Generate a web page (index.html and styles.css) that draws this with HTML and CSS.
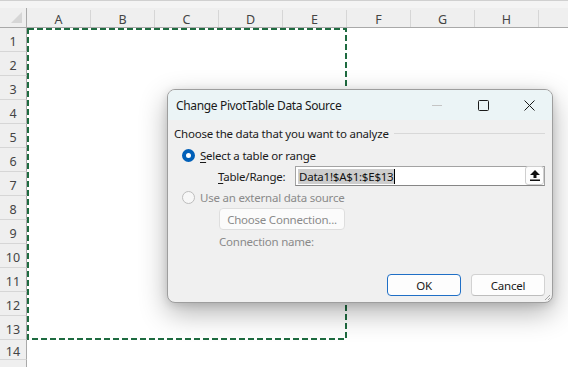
FILE: index.html
```html
<!DOCTYPE html>
<html>
<head>
<meta charset="utf-8">
<link rel="stylesheet" href="styles.css">
</head>
<body>
<div class="topbar"></div>
<div class="sheet">
  <div class="corner"><svg class="tri" width="12" height="12" viewBox="0 0 12 12"><polygon points="11,0 11,11 0,11" fill="#d6d6d6"/></svg></div>
  <div class="colheads">
    <div class="col">A</div><div class="col">B</div><div class="col">C</div><div class="col">D</div><div class="col">E</div><div class="col">F</div><div class="col">G</div><div class="col">H</div><div class="col"></div>
  </div>
  <div class="rh">1</div><div class="rh">2</div><div class="rh">3</div><div class="rh">4</div><div class="rh">5</div><div class="rh">6</div><div class="rh">7</div><div class="rh">8</div><div class="rh">9</div><div class="rh">10</div><div class="rh">11</div><div class="rh">12</div><div class="rh">13</div><div class="rh">14</div><div class="rh">15</div>
  <div class="cells"></div>
</div>

<svg class="marquee" width="320" height="312" viewBox="0 0 320 312">
  <rect x="1" y="1" width="318" height="310" fill="none" stroke="#1e6b40" stroke-width="2" stroke-dasharray="6 3"/>
</svg>

<div class="dialog">
  <div class="titlebar">
    <span class="title">Change PivotTable Data Source</span>
    <div class="controls">
      <span class="ctl"><svg width="10" height="10" viewBox="0 0 10 10"><line x1="0" y1="5.5" x2="10" y2="5.5" stroke="#c4c4c4" stroke-width="1"/></svg></span>
      <span class="ctl"><svg width="11" height="11" viewBox="0 0 11 11"><rect x="0.5" y="0.5" width="10" height="10" rx="1" fill="none" stroke="#1a1a1a" stroke-width="1"/></svg></span>
      <span class="ctl"><svg width="11" height="11" viewBox="0 0 11 11"><path d="M0.5 0.5 L10.5 10.5 M10.5 0.5 L0.5 10.5" stroke="#1a1a1a" stroke-width="1"/></svg></span>
    </div>
  </div>
  <div class="body">
    <div class="group-head"><span>Choose the data that you want to analyze</span><span class="rule"></span></div>
    <div class="opt"><span class="radio on"></span><span><u>S</u>elect a table or range</span></div>
    <div class="field">
      <span class="flabel"><u>T</u>able/Range:</span>
      <div class="input">
        <span class="sel">Data1!$A$1:$E$13</span><span class="caret"></span>
        <span class="pick"><svg width="10" height="11" viewBox="0 0 10 11"><polygon points="5,0 10,5 6.5,5 6.5,8 3.5,8 3.5,5 0,5" fill="#111"/><rect x="0" y="9.5" width="10" height="1.5" fill="#111"/></svg></span>
      </div>
    </div>
    <div class="opt off"><span class="radio"></span><span>Use an external data source</span></div>
    <div class="indent"><button class="btn dis">Choose Connection...</button></div>
    <div class="indent muted conn">Connection name:</div>
    <div class="actions">
      <button class="btn primary">OK</button>
      <button class="btn">Cancel</button>
    </div>
  </div>
  <svg class="grip" width="8" height="8" viewBox="0 0 8 8"><path d="M7 2 L2 7 M7 5 L5 7" stroke="#a8a8a8" stroke-width="1"/></svg>
</div>
</body>
</html>
```

FILE: styles.css
```css
html, body {
  margin: 0;
  padding: 0;
}
body {
  width: 568px;
  height: 367px;
  overflow: hidden;
  position: relative;
  background: #fff;
  font-family: "Noto Sans", "Segoe UI", sans-serif;
}

.topbar {
  height: 8px;
  box-sizing: border-box;
  background: #f4f4f4;
  border-top: 1px solid #d0d0d0;
}

.sheet {
  display: grid;
  grid-template-columns: 27px 1fr;
  grid-template-rows: 20px repeat(13, 24px) 20px 24px;
  color: #444;
  font-size: 12.5px;
}

.corner {
  background: #efefef;
  border-right: 1px solid #a9a9a9;
  border-bottom: 1px solid #a9a9a9;
  box-sizing: border-box;
  display: flex;
  align-items: flex-end;
  justify-content: flex-end;
  padding: 0 3px 3px 0;
}

.colheads {
  display: flex;
  overflow: hidden;
  background: #efefef;
  border-bottom: 1px solid #a9a9a9;
  box-sizing: border-box;
}
.col {
  flex: 0 0 64px;
  box-sizing: border-box;
  border-right: 1px solid #d6d6d6;
  margin-top: 2px;
  display: flex;
  align-items: center;
  justify-content: center;
  padding-top: 1px;
}

.rh {
  grid-column: 1;
  background: #efefef;
  border-right: 1px solid #a9a9a9;
  border-bottom: 1px solid #d6d6d6;
  box-sizing: border-box;
  display: flex;
  align-items: center;
  justify-content: center;
  padding-top: 3px;
}

.cells {
  grid-column: 2;
  grid-row: 2 / -1;
  background: #fff;
}

.marquee {
  position: absolute;
  left: 27px;
  top: 28px;
}

/* dialog */
.dialog {
  position: absolute;
  left: 167px;
  top: 89px;
  width: 386px;
  height: 214px;
  box-sizing: border-box;
  border: 1px solid #9e9e9e;
  border-radius: 8px;
  background: #f0f0f0;
  box-shadow: 0 10px 28px rgba(0, 0, 0, 0.30), 0 2px 8px rgba(0, 0, 0, 0.12);
  display: flex;
  flex-direction: column;
  overflow: hidden;
  font-size: 11.5px;
  letter-spacing: -0.22px;
  color: #1a1a1a;
}

.titlebar {
  height: 30px;
  flex: 0 0 30px;
  background: #ebf4f6;
  display: flex;
  align-items: center;
  padding-left: 8px;
}
.title {
  flex: 1;
  font-size: 12px;
  letter-spacing: -0.35px;
}
.controls {
  display: flex;
}
.ctl {
  width: 46px;
  height: 30px;
  display: flex;
  align-items: center;
  justify-content: center;
}

.body {
  flex: 1;
  display: flex;
  flex-direction: column;
  padding: 0 7px 6px 6px;
}

.group-head {
  display: flex;
  align-items: center;
  height: 16px;
  margin-top: 5px;
}
.rule {
  flex: 1;
  height: 1px;
  background: #d8d8d8;
  margin-left: 5px;
}

.opt {
  display: flex;
  align-items: center;
  height: 16px;
  padding-left: 8px;
  gap: 5px;
  margin-top: 6px;
}
.opt.off {
  color: #8a8a8a;
  margin-top: 3px;
}
.radio {
  width: 13px;
  height: 13px;
  box-sizing: border-box;
  border-radius: 50%;
  border: 1px solid #bdbdbd;
  background: #f7f7f7;
}
.radio.on {
  border: 4px solid #005fb8;
  background: #fff;
}

u {
  text-decoration-thickness: 1px;
  text-underline-offset: 2px;
}

.field {
  display: flex;
  align-items: center;
  margin-top: 3px;
  padding-left: 44px;
  height: 20px;
}
.flabel {
  width: 77px;
  flex: 0 0 77px;
}
.input {
  flex: 1;
  height: 20px;
  box-sizing: border-box;
  background: #fff;
  border: 1px solid #a3a3a3;
  border-bottom-color: #868686;
  display: flex;
  align-items: center;
  padding-left: 2px;
  position: relative;
}
.sel {
  background: #cdcdcd;
  color: #111;
  padding: 0 1px;
  line-height: 15px;
}
.caret {
  width: 1px;
  height: 15px;
  background: #000;
}
.pick {
  position: absolute;
  right: 0;
  top: -1px;
  width: 19px;
  height: 19px;
  box-sizing: border-box;
  border: 1px solid #cfcfcf;
  border-radius: 3px;
  background: #fdfdfd;
  display: flex;
  align-items: center;
  justify-content: center;
}

.indent {
  padding-left: 45px;
}
.muted {
  color: #8a8a8a;
}
.conn {
  margin-top: 3px;
  height: 16px;
  display: flex;
  align-items: center;
}

.btn {
  font: inherit;
  letter-spacing: inherit;
  height: 22px;
  box-sizing: border-box;
  border-radius: 4px;
  background: #fdfdfd;
  border: 1px solid #d2d2d2;
  border-bottom-color: #bdbdbd;
  color: #1a1a1a;
  padding: 0;
  margin: 3px 0 0 0;
  display: inline-flex;
  align-items: center;
  justify-content: center;
}
.btn.dis {
  width: 126px;
  color: #8a8a8a;
  background: #fbfbfb;
  border-color: #dedede;
}
.actions {
  margin-top: auto;
  display: flex;
  justify-content: flex-end;
  gap: 10px;
}
.actions .btn {
  width: 74px;
  margin: 0;
}
.btn.primary {
  border-color: #1f6fc6;
}

.grip {
  position: absolute;
  right: 1px;
  bottom: 1px;
}
```
